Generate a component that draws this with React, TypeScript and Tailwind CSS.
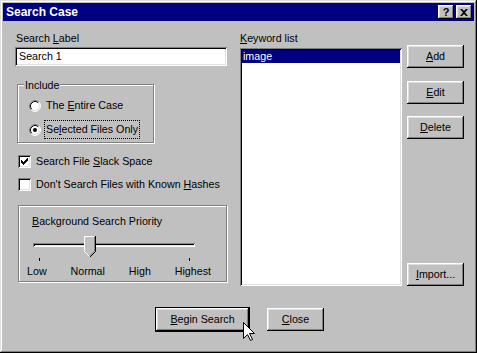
const raised =
  "shadow-[inset_-1px_-1px_#000,inset_1px_1px_#fff,inset_-2px_-2px_#808080,inset_2px_2px_#dfdfdf]"
const sunken =
  "shadow-[inset_1px_1px_#808080,inset_-1px_-1px_#fff,inset_2px_2px_#000,inset_-2px_-2px_#dfdfdf]"
const etched = "border border-[#808080] shadow-[inset_1px_1px_#fff,1px_1px_#fff]"

function Radio({ checked }: { checked?: boolean }) {
  return (
    <svg width="12" height="12" viewBox="0 0 12 12" className="shrink-0">
      <circle cx="6" cy="6" r="5" fill="#fff" />
      <path d="M2.11 9.89A5.5 5.5 0 0 1 9.89 2.11" stroke="#808080" fill="none" />
      <path d="M9.89 2.11A5.5 5.5 0 0 1 2.11 9.89" stroke="#fff" fill="none" />
      <path d="M2.82 9.18A4.5 4.5 0 0 1 9.18 2.82" stroke="#000" fill="none" />
      <path d="M9.18 2.82A4.5 4.5 0 0 1 2.82 9.18" stroke="#dfdfdf" fill="none" />
      {checked && <circle cx="6" cy="6" r="2" fill="#000" />}
    </svg>
  )
}

// 7x7 win95 check glyph
const CHECK = [
  "......x",
  ".....xx",
  "x...xxx",
  "xx.xxx.",
  "xxxxx..",
  ".xxx...",
  "..x....",
]

function Checkbox({ checked }: { checked?: boolean }) {
  return (
    <div className={`w-[13px] h-[13px] bg-white shrink-0 relative ${sunken}`}>
      {checked && (
        <svg width="7" height="7" className="absolute left-[3px] top-[3px]">
          {CHECK.flatMap((row, y) =>
            row.split("").map((c, x) =>
              c === "x" ? <rect key={`${x}-${y}`} x={x} y={y} width="1" height="1" fill="#000" /> : null
            )
          )}
        </svg>
      )}
    </div>
  )
}

function Button({ children, className = "" }: { children: React.ReactNode; className?: string }) {
  return (
    <div className={`w-[57px] h-[23px] flex items-center justify-center bg-[#c0c0c0] ${raised} ${className}`}>
      {children}
    </div>
  )
}

export default function App() {
  return (
    <div
      className="relative w-[477px] h-[353px] bg-[#c0c0c0] p-[3px] flex flex-col text-[10.7px] leading-[13px] text-black shadow-[inset_-1px_-1px_#000,inset_1px_1px_#dfdfdf,inset_-2px_-2px_#808080,inset_2px_2px_#fff]"
      style={{ fontFamily: '"Liberation Sans", Arial, sans-serif' }}
    >
      {/* title bar */}
      <div className="h-[18px] bg-[#000080] flex items-center justify-between pl-[3px] pr-[2px]">
        <span className="text-white font-bold text-[12px] leading-[14px]">Search Case</span>
        <div className="flex gap-[2px]">
          <div className={`w-[16px] h-[14px] bg-[#c0c0c0] flex items-center justify-center font-bold text-[11px] ${raised}`}>
            ?
          </div>
          <div className={`w-[16px] h-[14px] bg-[#c0c0c0] flex items-center justify-center ${raised}`}>
            <svg width="8" height="7" viewBox="0 0 8 7">
              <path d="M0 0h2l2 2 2-2h2L5 3.5 8 7H6L4 5 2 7H0l3-3.5z" fill="#000" />
            </svg>
          </div>
        </div>
      </div>

      {/* body */}
      <div className="flex h-[265px]">
        {/* left column */}
        <div className="ml-[12px] w-[212px] flex flex-col">
          <div className="mt-[11px] pl-[1px]">
            Search <u>L</u>abel
          </div>
          <div className={`mt-[2px] h-[19px] bg-white flex items-center pl-[4px] ${sunken}`}>Search 1</div>

          <div className={`relative mt-[18px] ml-[2px] w-[137px] h-[59px] ${etched}`}>
            <span className="absolute -top-[6px] left-[6px] bg-[#c0c0c0] px-[1px]">Include</span>
            <div className="flex items-center mt-[14px] ml-[11px]">
              <Radio />
              <span className="ml-[5px]">
                The <u>E</u>ntire Case
              </span>
            </div>
            <div className="flex items-center mt-[8px] ml-[11px]">
              <Radio checked />
              <span className="ml-[3px] px-[1px] py-[2px] border border-dotted border-black">
                Se<u>l</u>ected Files Only
              </span>
            </div>
          </div>

          <div className="flex items-center mt-[12px] ml-[3px]">
            <Checkbox checked />
            <span className="ml-[5px]">
              Search File <u>S</u>lack Space
            </span>
          </div>
          <div className="flex items-center mt-[10px] ml-[3px]">
            <Checkbox />
            <span className="ml-[5px]">
              Don't Search Files with Known <u>H</u>ashes
            </span>
          </div>

          <div className={`relative mt-[14px] ml-[3px] w-[209px] h-[77px] ${etched}`}>
            <div className="mt-[9px] ml-[13px]">
              <u>B</u>ackground Search Priority
            </div>
            <div className="relative mt-[15px] ml-[14px] w-[162px] h-[4px]">
              <div className={`h-[4px] ${sunken}`} />
              <svg width="12" height="21" viewBox="0 0 12 21" className="absolute left-[51px] -top-[7px]">
                <polygon points="0,0 11,0 11,15.5 5.5,21 0,15.5" fill="#c0c0c0" />
                <polyline points="0.5,15.5 0.5,0.5 10.5,0.5" stroke="#fff" fill="none" />
                <line x1="0.5" y1="15.5" x2="5.5" y2="20.5" stroke="#fff" />
                <polyline points="11.5,0 11.5,15.5 6,21" stroke="#000" fill="none" />
                <polyline points="10.5,1 10.5,15 5.5,20" stroke="#808080" fill="none" />
              </svg>
            </div>
            <div className="flex justify-between mt-[11px] ml-[20px] w-[151px] h-[3px]">
              <div className="w-[1px] h-[3px] bg-black" />
              <div className="w-[1px] h-[3px] bg-black" />
            </div>
            <div className="flex justify-between mt-[4px] pl-[8px] pr-[15px]">
              <span>Low</span>
              <span>Normal</span>
              <span>High</span>
              <span>Highest</span>
            </div>
          </div>
        </div>

        {/* keyword list */}
        <div className="ml-[13px] w-[162px] flex flex-col">
          <div className="mt-[11px]">
            <u>K</u>eyword list
          </div>
          <div className={`mt-[3px] h-[238px] bg-white p-[2px] ${sunken}`}>
            <div className="h-[13px] bg-[#000080] text-white pl-[1px]">image</div>
          </div>
        </div>

        {/* buttons */}
        <div className="ml-[5px] flex flex-col">
          <Button className="mt-[24px]">
            <u>A</u>dd
          </Button>
          <Button className="mt-[13px]">
            <u>E</u>dit
          </Button>
          <Button className="mt-[12px]">
            <u>D</u>elete
          </Button>
          <Button className="mt-[124px]">
            <u>I</u>mport...
          </Button>
        </div>
      </div>

      {/* bottom buttons */}
      <div className="flex items-center mt-[21px] ml-[152px] gap-[17px]">
        <div className={`w-[95px] h-[25px] border border-black flex items-center justify-center ${raised}`}>
          <span>
            <u>B</u>egin Search
          </span>
        </div>
        <Button>
          <u>C</u>lose
        </Button>
      </div>

      {/* mouse pointer */}
      <svg width="13" height="20" viewBox="0 0 13 20" className="absolute left-[243px] top-[322px]">
        <path d="M0.5 0.5V16.5L4.5 12.5L7.5 18.5L9.5 17.5L6.5 11.5H11.5Z" fill="#fff" stroke="#000" />
      </svg>
    </div>
  )
}
